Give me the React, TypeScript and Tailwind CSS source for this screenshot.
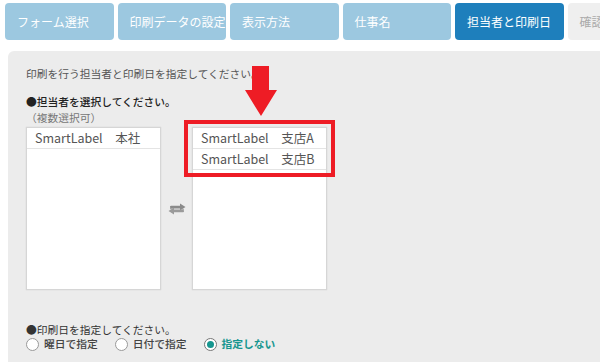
import React from "react";

const tabs = [
  { label: "フォーム選択", state: "done" },
  { label: "印刷データの設定", state: "done" },
  { label: "表示方法", state: "done" },
  { label: "仕事名", state: "done" },
  { label: "担当者と印刷日", state: "active" },
  { label: "確認", state: "todo" },
];

const SwapIcon = () => (
  <svg width="18" height="12" viewBox="0 0 18 12">
    <path d="M2 3.2 Q2 2.8 3 2.8 H12 V0.5 L17.5 4 L12 7.5 V5.4 H4.5 Q3 5.4 2.4 6.4 Z" fill="#8a8a8a" />
    <path d="M16 8.8 Q16 9.2 15 9.2 H6 V11.5 L0.5 8 L6 4.5 V6.6 H13.5 Q15 6.6 15.6 5.6 Z" fill="#9a9a9a" />
  </svg>
);

const ListBox = ({ items }: { items: string[] }) => (
  <div className="w-[135px] h-[163px] bg-white border border-[#d6d6d6] shadow-[0_0_1px_rgba(0,0,0,0.15)]">
    {items.map((it) => (
      <div
        key={it}
        className="h-[21px] flex items-center pl-[8px] text-[12.5px] text-[#555] border-b border-[#e4e4e4] whitespace-pre"
      >
        {it}
      </div>
    ))}
  </div>
);

const Radio = ({ label, checked }: { label: string; checked?: boolean }) => (
  <div className="flex items-center gap-[5px]">
    <span
      className={
        checked
          ? "w-[13px] h-[13px] rounded-full border border-[#777] bg-white flex items-center justify-center"
          : "w-[13px] h-[13px] rounded-full border border-[#999] bg-white"
      }
    >
      {checked && <span className="w-[7px] h-[7px] rounded-full bg-[#16968f]" />}
    </span>
    <span className={checked ? "text-[#16968f] font-bold" : "text-[#444] font-medium"}>{label}</span>
  </div>
);

export default function App() {
  return (
    <div
      className="w-[600px] h-[362px] bg-white overflow-hidden flex flex-col"
      style={{ fontFamily: '"Noto Sans CJK JP", "Noto Sans", sans-serif' }}
    >
      {/* step tabs */}
      <div className="flex gap-[4px] pt-[3px] pl-[5px] shrink-0">
        {tabs.map((t) => (
          <div
            key={t.label}
            className={
              t.state === "active"
                ? "w-[108.5px] h-[37px] shrink-0 rounded-[4px] bg-[#1e7fbc] text-white text-[12px] flex items-center pl-[12px]"
                : t.state === "done"
                ? "w-[108.5px] h-[37px] shrink-0 rounded-[4px] bg-[#9cc8e0] text-white text-[12px] flex items-center pl-[12px]"
                : "w-[108.5px] h-[37px] shrink-0 rounded-[4px] bg-[#efefef] text-[#aaa] text-[12px] flex items-center pl-[12px]"
            }
          >
            {t.label}
          </div>
        ))}
      </div>

      {/* panel */}
      <div className="relative ml-[8px] mt-[11px] flex-1 bg-[#ececec] rounded-tl-[6px] pl-[18px] pt-[15px] text-[10.75px] text-[#555]">
        <p className="leading-[16px]">印刷を行う担当者と印刷日を指定してください。</p>
        <p className="mt-[12px] leading-[16px] text-[#222] font-medium">●担当者を選択してください。</p>
        <p className="leading-[16px] text-[#777]">（複数選択可）</p>

        <div className="mt-[1px] flex items-center">
          <ListBox items={["SmartLabel　本社"]} />
          <div className="w-[31px] flex justify-center">
            <SwapIcon />
          </div>
          <ListBox items={["SmartLabel　支店A", "SmartLabel　支店B"]} />
        </div>

        <p className="mt-[33px] leading-[14px] text-[#333]">●印刷日を指定してください。</p>
        <div className="flex items-center leading-[14px] text-[10.75px]">
          <Radio label="曜日で指定" />
          <div className="ml-[17px]">
            <Radio label="日付で指定" />
          </div>
          <div className="ml-[17px]">
            <Radio label="指定しない" checked />
          </div>
        </div>

        {/* annotation: red frame */}
        <div className="absolute left-[176px] top-[69px] w-[151px] h-[57px] border-[4px] border-[#ee1c25]" />
        {/* annotation: red arrow */}
        <svg className="absolute left-[237px] top-[15px]" width="32" height="50" viewBox="0 0 32 50">
          <path d="M7 0 H24 V24 H32 L16 50 L0 24 H7 Z" fill="#ee1c25" />
        </svg>
      </div>
    </div>
  );
}
